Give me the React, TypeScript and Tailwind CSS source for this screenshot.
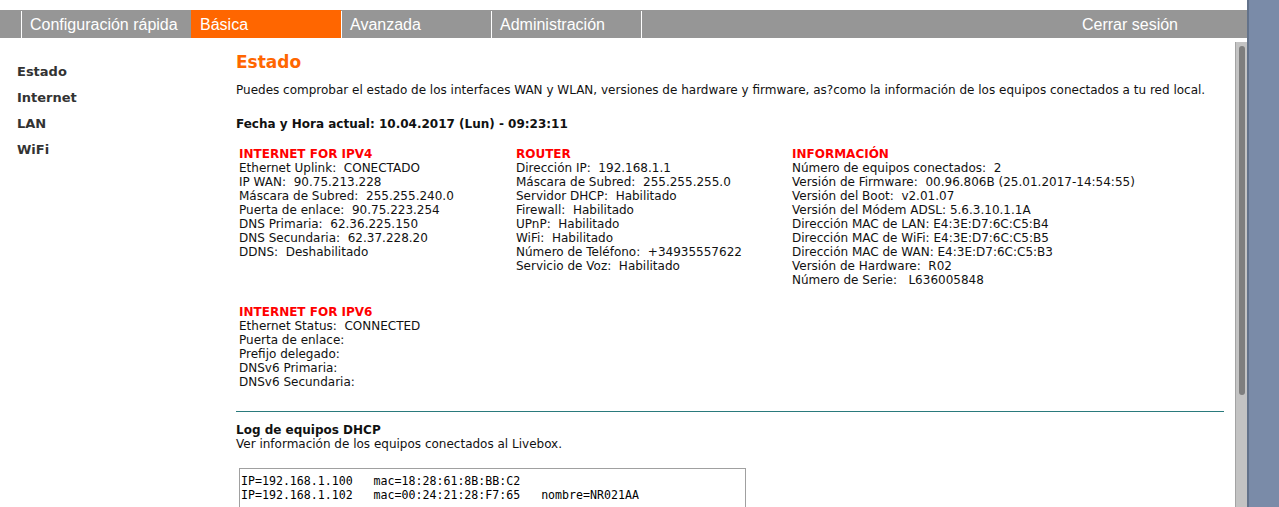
import React from 'react';

const ipv4 = [
  'Ethernet Uplink:  CONECTADO',
  'IP WAN:  90.75.213.228',
  'Máscara de Subred:  255.255.240.0',
  'Puerta de enlace:  90.75.223.254',
  'DNS Primaria:  62.36.225.150',
  'DNS Secundaria:  62.37.228.20',
  'DDNS:  Deshabilitado',
];

const router = [
  'Dirección IP:  192.168.1.1',
  'Máscara de Subred:  255.255.255.0',
  'Servidor DHCP:  Habilitado',
  'Firewall:  Habilitado',
  'UPnP:  Habilitado',
  'WiFi:  Habilitado',
  'Número de Teléfono:  +34935557622',
  'Servicio de Voz:  Habilitado',
];

const info = [
  'Número de equipos conectados:  2',
  'Versión de Firmware:  00.96.806B (25.01.2017-14:54:55)',
  'Versión del Boot:  v2.01.07',
  'Versión del Módem ADSL: 5.6.3.10.1.1A',
  'Dirección MAC de LAN: E4:3E:D7:6C:C5:B4',
  'Dirección MAC de WiFi: E4:3E:D7:6C:C5:B5',
  'Dirección MAC de WAN: E4:3E:D7:6C:C5:B3',
  'Versión de Hardware:  R02',
  'Número de Serie:   L636005848',
];

const ipv6 = [
  'Ethernet Status:  CONNECTED',
  'Puerta de enlace:',
  'Prefijo delegado:',
  'DNSv6 Primaria:',
  'DNSv6 Secundaria:',
];

function Block({ title, lines }: { title: string; lines: string[] }) {
  return (
    <div className="leading-[14px]">
      <div className="font-bold text-[#ff0000]">{title}</div>
      {lines.map((l) => (
        <div key={l} className="whitespace-pre">
          {l}
        </div>
      ))}
    </div>
  );
}

export default function App() {
  const body = { fontFamily: '"DejaVu Sans", Verdana, sans-serif' };
  return (
    <div className="flex w-[1279px] h-[507px] overflow-hidden bg-[#7a8ba8]">
      <div className="flex flex-col w-[1247px] h-full bg-white">
        <div className="h-[10px]" />
        {/* top nav */}
        <div
          className="flex h-[28px] bg-[#969696] text-white text-[16px] leading-[28px] pt-[1px]"
          style={{ fontFamily: '"Liberation Sans", Arial, sans-serif' }}
        >
          <div className="w-[21px]" />
          <div className="w-[170px] border-l border-white pl-[8px]">Configuración rápida</div>
          <div className="w-[150px] bg-[#ff6600] pl-[9px] -mt-[1px] pt-[1px]">Básica</div>
          <div className="w-[150px] border-l border-white pl-[8px]">Avanzada</div>
          <div className="w-[150px] border-l border-white pl-[8px]">Administración</div>
          <div className="flex-1 border-l border-white flex justify-end pr-[69px]">Cerrar sesión</div>
        </div>

        <div className="flex flex-1 min-h-0">
          {/* sidebar */}
          <div className="w-[236px] pt-[21px] pl-[17px] text-[13px] font-bold text-[#333] leading-[26px]" style={body}>
            <div>Estado</div>
            <div>Internet</div>
            <div>LAN</div>
            <div>WiFi</div>
          </div>

          {/* main */}
          <div className="flex-1 pt-[14px] pr-[11px] text-[12px] text-[#111]" style={body}>
            <h1 className="text-[17px] font-bold text-[#ff6600] leading-[20px]">Estado</h1>
            <p className="mt-[11px] leading-[14px]">
              Puedes comprobar el estado de los interfaces WAN y WLAN, versiones de hardware y firmware, as?como la información de los equipos conectados a tu red local.
            </p>
            <p className="mt-[20px] font-bold leading-[14px]">Fecha y Hora actual: 10.04.2017 (Lun) - 09:23:11</p>

            <div className="mt-[16px] pl-[3px] grid grid-cols-[277px_276px_1fr]">
              <Block title="INTERNET FOR IPV4" lines={ipv4} />
              <Block title="ROUTER" lines={router} />
              <Block title="INFORMACIÓN" lines={info} />
            </div>

            <div className="mt-[18px] pl-[3px]">
              <Block title="INTERNET FOR IPV6" lines={ipv6} />
            </div>

            <div className="mt-[22px] h-px bg-[#2a7a7c]" />

            <div className="mt-[11px] leading-[14px]">
              <div className="font-bold">Log de equipos DHCP</div>
              <div>Ver información de los equipos conectados al Livebox.</div>
            </div>

            <div
              className="mt-[17px] ml-[3px] w-[507px] h-[80px] border border-[#a0a0a0] pl-[1px] pt-[5px] text-[11.6px] leading-[14px] whitespace-pre text-black"
              style={{ fontFamily: '"DejaVu Sans Mono", monospace' }}
            >
              <div>IP=192.168.1.100   mac=18:28:61:8B:BB:C2</div>
              <div>IP=192.168.1.102   mac=00:24:21:28:F7:65   nombre=NR021AA</div>
            </div>
          </div>

          {/* scrollbar */}
          <div className="w-[12px] pt-[4px] flex flex-col">
            <div className="flex-1 bg-[#c3c3c3] border-l border-[#a3a3a3] pt-[4px] pl-[3px]">
              <div className="w-[6px] h-[349px] rounded-[3px] bg-[#7e7e7e]" />
            </div>
          </div>
        </div>
      </div>
      <div className="w-[32px] h-full border-l-2 border-[#63728a] bg-[#7a8ba8]" />
    </div>
  );
}
